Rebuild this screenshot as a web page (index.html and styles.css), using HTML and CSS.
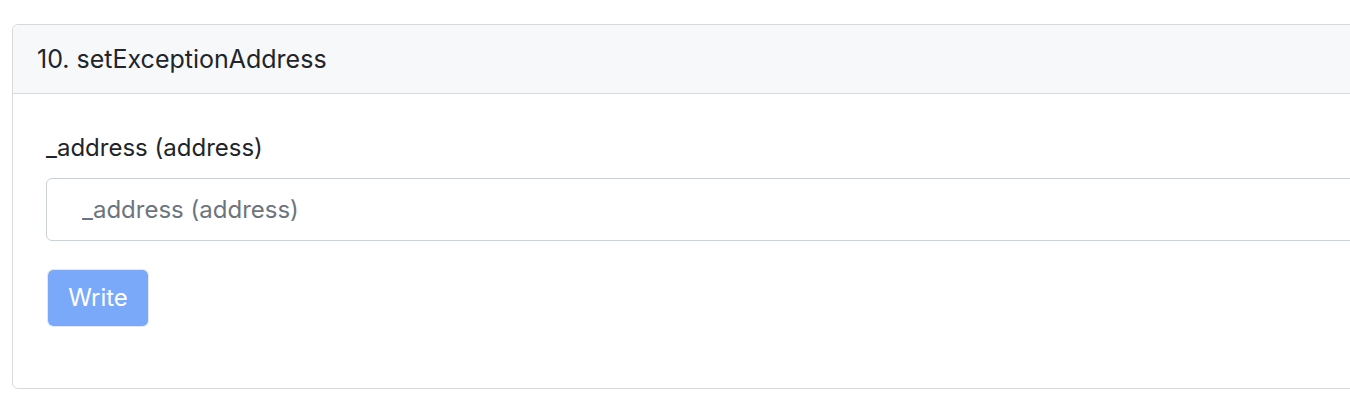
FILE: index.html
```html
<!DOCTYPE html>
<html lang="en">
<head>
<meta charset="utf-8">
<title>setExceptionAddress</title>
<link rel="stylesheet" href="styles.css">
</head>
<body>
<div class="page">
  <div class="card">
    <div class="card-header">10. setExceptionAddress</div>
    <div class="card-body">
      <label class="field-label" for="addr">_address (address)</label>
      <input class="field-input" id="addr" type="text" placeholder="_address (address)">
      <button class="btn-write" type="button" disabled>Write</button>
    </div>
  </div>
</div>
</body>
</html>
```
FILE: styles.css
```css
html, body {
  margin: 0;
  padding: 0;
  background: #ffffff;
  overflow: hidden;
}

.page {
  padding: 24px 0 0 12px;
  font-family: Inter, "Liberation Sans", Arial, sans-serif;
  color: #212529;
  overflow: hidden;
}

.card {
  width: 1400px;
  border: 1px solid #d9d9d9;
  border-radius: 6px;
  background: #ffffff;
}

.card-header {
  background: #f7f8f9;
  border-bottom: 1px solid #d9d9d9;
  border-radius: 6px 6px 0 0;
  padding: 16px 24px 16px 24px;
  font-size: 25px;
  line-height: 36px;
  color: #212529;
}

.card-body {
  display: flex;
  flex-direction: column;
  align-items: flex-start;
  padding: 36px 33px 61px 33px;
}

.field-label {
  font-size: 24px;
  line-height: 36px;
  margin-bottom: 12px;
}

.field-input {
  box-sizing: border-box;
  width: 100%;
  height: 63px;
  border: 1.5px solid #cbd1d7;
  border-radius: 6px;
  padding: 0 20px 0 35px;
  font-family: inherit;
  font-size: 24px;
  color: #495057;
  background: #ffffff;
  outline: none;
}

.field-input::placeholder {
  color: #6c757d;
  opacity: 1;
}

.btn-write {
  margin-top: 28px;
  margin-left: 1px;
  box-sizing: border-box;
  width: 102px;
  height: 58px;
  padding: 0;
  font-family: inherit;
  font-size: 24px;
  line-height: 36px;
  color: #ffffff;
  background: #7aa9fa;
  background-clip: padding-box;
  border: 1.5px solid #e4e8ee;
  border-radius: 6px;
  cursor: default;
}
```
